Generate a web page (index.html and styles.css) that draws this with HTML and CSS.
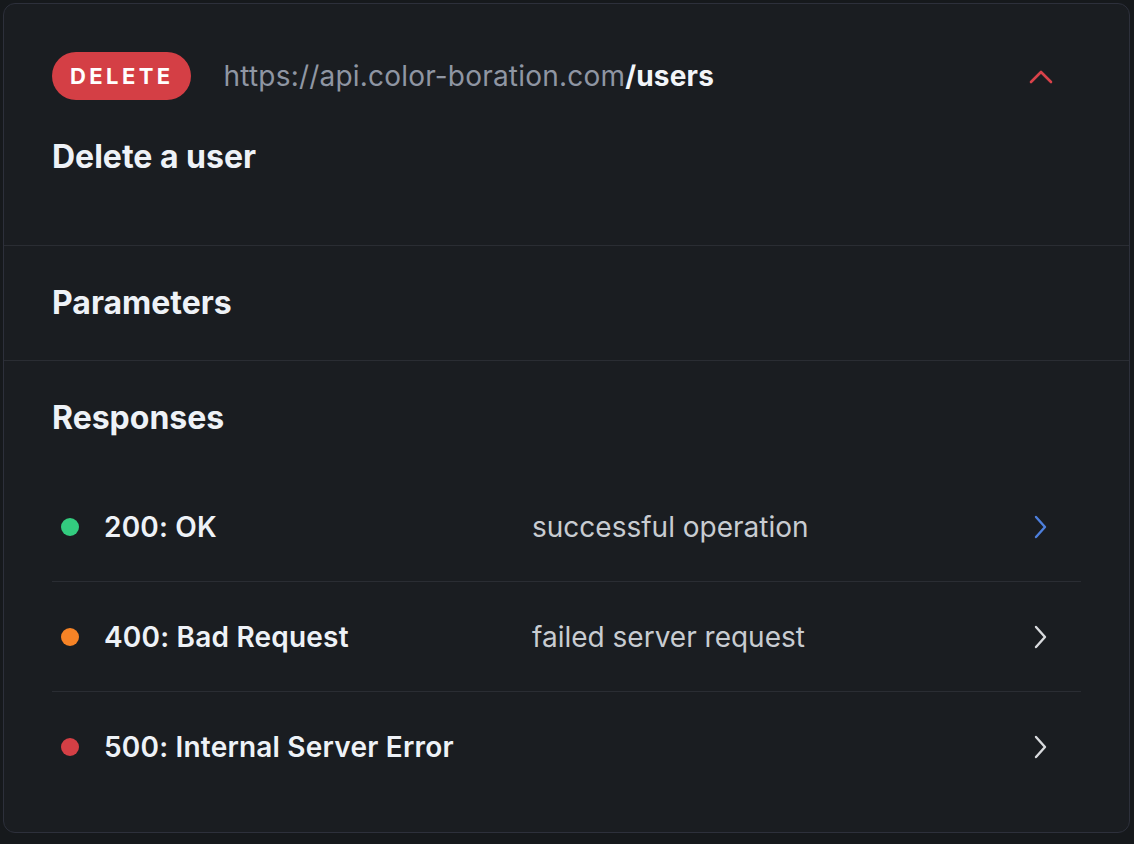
FILE: index.html
```html
<!DOCTYPE html>
<html lang="en">
<head>
  <meta charset="UTF-8">
  <title>DELETE /users</title>
  <link rel="stylesheet" href="styles.css">
</head>
<body>

  <div class="card">
    <div class="section head">
      <div class="endpoint">
        <span class="badge">DELETE</span>
        <span class="url">https://api.color-boration.com<b>/users</b></span>
        <svg class="toggle" width="24" height="24" viewBox="0 0 24 24" fill="none" stroke="#d8424a" stroke-width="2.6" stroke-linecap="round" stroke-linejoin="round">
          <polyline points="2,18 12,8 22,18"/>
        </svg>
      </div>
      <h2>Delete a user</h2>
    </div>

    <div class="section">
      <h2>Parameters</h2>
    </div>

    <div class="section responses">
      <h2>Responses</h2>
      <div class="rows">
        <div class="row">
          <span class="dot green"></span>
          <span class="code">200: OK</span>
          <span class="desc">successful operation</span>
          <svg class="arrow" width="24" height="24" viewBox="0 0 24 24" fill="none" stroke="#4d7fdc" stroke-width="2.4" stroke-linecap="round" stroke-linejoin="round">
            <polyline points="7,2 16,12 7,22"/>
          </svg>
        </div>
        <div class="row">
          <span class="dot orange"></span>
          <span class="code">400: Bad Request</span>
          <span class="desc">failed server request</span>
          <svg class="arrow" width="24" height="24" viewBox="0 0 24 24" fill="none" stroke="#d9dbde" stroke-width="2.4" stroke-linecap="round" stroke-linejoin="round">
            <polyline points="7,2 16,12 7,22"/>
          </svg>
        </div>
        <div class="row">
          <span class="dot red"></span>
          <span class="code">500: Internal Server Error</span>
          <span class="desc"></span>
          <svg class="arrow" width="24" height="24" viewBox="0 0 24 24" fill="none" stroke="#d9dbde" stroke-width="2.4" stroke-linecap="round" stroke-linejoin="round">
            <polyline points="7,2 16,12 7,22"/>
          </svg>
        </div>
      </div>
    </div>
  </div>

</body>
</html>
```

FILE: styles.css
```css
body {
  margin: 0;
  padding: 3px 4px 10px 3px;
  background: #16191c;
  font-family: Inter, "Noto Sans", sans-serif;
  color: #eef2f7;
}

.card {
  height: 830px;
  box-sizing: border-box;
  background: #1a1d21;
  border: 1.5px solid #2d303b;
  border-radius: 12px;
}

h2 {
  margin: 0;
  font-size: 32px;
  line-height: 38px;
  font-weight: 700;
}

.section {
  padding: 38px 48px;
  border-bottom: 1px solid #2a2d33;
}

.section.head {
  padding: 48px 48px 69px;
}

.section.responses {
  border-bottom: none;
  padding-bottom: 0;
}

.endpoint {
  display: flex;
  align-items: center;
  margin-bottom: 38px;
}

.badge {
  display: inline-block;
  height: 48px;
  line-height: 48px;
  padding: 0 17px 0 18px;
  border-radius: 24px;
  background: #d43f45;
  color: #fff;
  font-size: 22px;
  font-weight: 700;
  letter-spacing: 3.4px;
}

.url {
  margin-left: 33px;
  font-size: 28px;
  letter-spacing: 0.2px;
  color: #8f96a3;
  flex: 1;
}

.url b {
  color: #f2f5f9;
  font-weight: 700;
}

.toggle {
  margin-right: 28px;
}

.rows {
  margin-top: 35px;
}

.row {
  display: grid;
  grid-template-columns: 18px 453px 1fr 24px;
  align-items: center;
  height: 109px;
  padding: 0 28px 0 9px;
  border-bottom: 1px solid #2a2d33;
}

.row:last-child {
  border-bottom: none;
}

.dot {
  width: 18px;
  height: 18px;
  border-radius: 50%;
}

.dot.green { background: #33cc7f; }
.dot.orange { background: #f68326; }
.dot.red { background: #d43f45; }

.code {
  padding-left: 25px;
  font-size: 28px;
  font-weight: 600;
  letter-spacing: 0.2px;
}

.desc {
  font-size: 28px;
  color: #c8ccd1;
}
```
